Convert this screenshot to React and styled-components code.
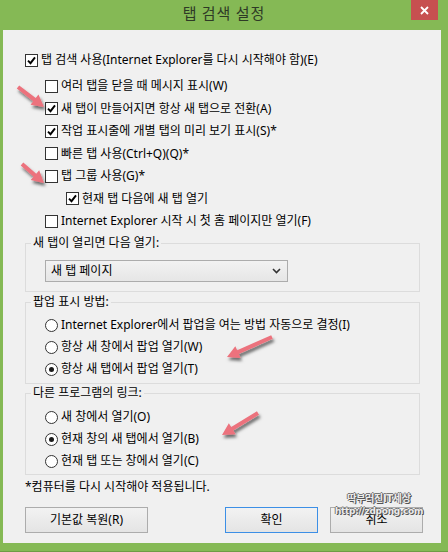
import styled, { createGlobalStyle } from "styled-components"

const GlobalStyle = createGlobalStyle`
  html, body {
    margin: 0;
    padding: 0;
    background: #85b955;
  }
  body {
    font-family: "Noto Sans", "Noto Sans CJK KR", sans-serif;
    font-size: 12px;
    color: #000;
  }
`

const options = [
    { label: "여러 탭을 닫을 때 메시지 표시(W)", checked: false, indent: 20 },
    { label: "새 탭이 만들어지면 항상 새 탭으로 전환(A)", checked: true, indent: 20 },
    { label: "작업 표시줄에 개별 탭의 미리 보기 표시(S)*", checked: true, indent: 20 },
    { label: "빠른 탭 사용(Ctrl+Q)(Q)*", checked: false, indent: 20 },
    { label: "탭 그룹 사용(G)*", checked: false, indent: 20 },
    { label: "현재 탭 다음에 새 탭 열기", checked: true, indent: 41 },
    { label: "Internet Explorer 시작 시 첫 홈 페이지만 열기(F)", checked: false, indent: 20 },
]

const popupOptions = [
    { label: "Internet Explorer에서 팝업을 여는 방법 자동으로 결정(I)", on: false },
    { label: "항상 새 창에서 팝업 열기(W)", on: false },
    { label: "항상 새 탭에서 팝업 열기(T)", on: true },
]

const linkOptions = [
    { label: "새 창에서 열기(O)", on: false },
    { label: "현재 창의 새 탭에서 열기(B)", on: true },
    { label: "현재 탭 또는 창에서 열기(C)", on: false },
]

const arrows = [
    [18, 87, 44, 107],
    [22, 164, 44, 183],
    [272, 337, 227, 357],
    [258, 413, 222, 435],
]

function arrowPoints([x1, y1, x2, y2]) {
    const dx = x2 - x1
    const dy = y2 - y1
    const len = Math.hypot(dx, dy)
    const ux = dx / len
    const uy = dy / len
    const px = -uy
    const py = ux
    const head = 12
    const hw = 6.5
    const sw = 2
    const bx = x2 - ux * head
    const by = y2 - uy * head
    const pts = [
        [x1 + px * sw, y1 + py * sw],
        [bx + px * sw, by + py * sw],
        [bx + px * hw, by + py * hw],
        [x2, y2],
        [bx - px * hw, by - py * hw],
        [bx - px * sw, by - py * sw],
        [x1 - px * sw, y1 - py * sw],
    ]
    return pts.map(p => p.join(",")).join(" ")
}

function CheckBox({ checked }) {
    return (
        <Box>
            {checked && (
                <svg width="9" height="9" viewBox="0 0 9 9">
                    <path d="M1 4.6 L3.5 7.2 L8 1.3" fill="none" stroke="#000" strokeWidth="1.9" />
                </svg>
            )}
        </Box>
    )
}

export default function App() {
    return (
        <Window>
            <GlobalStyle />
            <TitleBar>
                <span />
                <Title>탭 검색 설정</Title>
                <CloseButton>
                    <svg width="9" height="9" viewBox="0 0 9 9">
                        <path d="M1 1 L8 8 M8 1 L1 8" stroke="#fff" strokeWidth="1.8" />
                    </svg>
                </CloseButton>
            </TitleBar>

            <Client>
                <Row indent={0}>
                    <CheckBox checked />
                    <span>탭 검색 사용(Internet Explorer를 다시 시작해야 함)(E)</span>
                </Row>
                <SubOptions>
                    {options.map(o => (
                        <Row key={o.label} indent={o.indent}>
                            <CheckBox checked={o.checked} />
                            <span>{o.label}</span>
                        </Row>
                    ))}
                </SubOptions>

                <Group $mt={2.5}>
                    <Legend>새 탭이 열리면 다음 열기:</Legend>
                    <GroupBody $pt={9} $pb={9}>
                        <Select>
                            <span>새 탭 페이지</span>
                            <svg width="9" height="6" viewBox="0 0 9 6">
                                <path d="M1 1 L4.5 4.5 L8 1" fill="none" stroke="#333" strokeWidth="1.6" />
                            </svg>
                        </Select>
                    </GroupBody>
                </Group>

                <Group $mt={2}>
                    <Legend>팝업 표시 방법:</Legend>
                    <GroupBody $pt={4} $pb={3}>
                        {popupOptions.map(o => (
                            <RadioRow key={o.label}>
                                <Radio $on={o.on} />
                                <span>{o.label}</span>
                            </RadioRow>
                        ))}
                    </GroupBody>
                </Group>

                <Group $mt={1}>
                    <Legend>다른 프로그램의 링크:</Legend>
                    <GroupBody $pt={5} $pb={2}>
                        {linkOptions.map(o => (
                            <RadioRow key={o.label}>
                                <Radio $on={o.on} />
                                <span>{o.label}</span>
                            </RadioRow>
                        ))}
                    </GroupBody>
                </Group>

                <Note>*컴퓨터를 다시 시작해야 적용됩니다.</Note>

                <ButtonRow>
                    <Button $width={123}>기본값 복원(R)</Button>
                    <ButtonPair>
                        <Button $width={93} $primary>확인</Button>
                        <Button $width={93}>취소</Button>
                    </ButtonPair>
                </ButtonRow>
            </Client>

            <Watermark>
                <span>딱부러진IT세상</span>
                <span>http://zdpong.com</span>
            </Watermark>

            <Arrows width="448" height="552" viewBox="0 0 448 552">
                <defs>
                    <filter id="shadow" x="-50%" y="-50%" width="200%" height="200%">
                        <feDropShadow dx="1.5" dy="3" stdDeviation="1.8" floodColor="#000" floodOpacity="0.55" />
                    </filter>
                </defs>
                {arrows.map((a, i) => (
                    <polygon key={i} points={arrowPoints(a)} fill="#ec727d" filter="url(#shadow)" />
                ))}
            </Arrows>
        </Window>
    )
}

const Window = styled.div`
    position: relative;
    width: 448px;
    height: 552px;
    background: #85b955;
    border-bottom: 1px solid #6e9c45;
    box-sizing: border-box;
    overflow: hidden;
`
const TitleBar = styled.div`
    height: 30px;
    display: grid;
    grid-template-columns: 1fr auto 1fr;
    align-items: start;
`
const Title = styled.div`
    font-family: "Noto Sans CJK KR", sans-serif;
    font-size: 15px;
    line-height: 26px;
    color: #2e3a26;
    letter-spacing: 1px;
`
const CloseButton = styled.div`
    justify-self: end;
    margin-right: 10px;
    width: 27px;
    height: 20px;
    background: #c75050;
    display: flex;
    align-items: center;
    justify-content: center;
`
const Client = styled.div`
    margin: 0 7px 0 3px;
    height: 513px;
    box-sizing: border-box;
    background: #f0f0f0;
    padding: 19px 18px 10px 22px;
    display: flex;
    flex-direction: column;
`
const SubOptions = styled.div`
    margin-top: 3.5px;
`
const Row = styled.div`
    display: flex;
    align-items: center;
    gap: 3px;
    height: 22.5px;
    padding-left: ${p => p.indent}px;
    white-space: nowrap;
    line-height: 16px;
`
const Box = styled.span`
    width: 13px;
    height: 13px;
    box-sizing: border-box;
    border: 1px solid #333;
    background: #fff;
    display: flex;
    align-items: center;
    justify-content: center;
    flex-shrink: 0;
`
const Group = styled.fieldset`
    margin: ${p => p.$mt}px 3px 0 0;
    padding: 0;
    border: 1px solid #dcdcdc;
    min-width: 0;
`
const Legend = styled.legend`
    margin-left: 5px;
    padding: 0 2px;
    line-height: 16px;
`
const GroupBody = styled.div`
    padding: ${p => p.$pt}px 0 ${p => p.$pb}px 19px;
`
const Select = styled.div`
    width: 243px;
    height: 22px;
    box-sizing: border-box;
    border: 1px solid #acacac;
    background: linear-gradient(#f2f2f2, #e6e6e6);
    display: flex;
    align-items: center;
    justify-content: space-between;
    padding: 0 6px 0 5px;
    line-height: 16px;
`
const RadioRow = styled.div`
    display: flex;
    align-items: center;
    gap: 3px;
    height: 22px;
    white-space: nowrap;
    line-height: 16px;
`
const Radio = styled.span`
    width: 13px;
    height: 13px;
    box-sizing: border-box;
    border: 1px solid #333;
    border-radius: 50%;
    background: #fff;
    flex-shrink: 0;
    display: flex;
    align-items: center;
    justify-content: center;
    &::after {
        content: "";
        width: 5px;
        height: 5px;
        border-radius: 50%;
        background: #1a1a1a;
        display: ${p => (p.$on ? "block" : "none")};
    }
`
const Note = styled.div`
    margin-top: 4px;
    line-height: 16px;
`
const ButtonRow = styled.div`
    margin-top: 12px;
    display: flex;
    justify-content: space-between;
`
const ButtonPair = styled.div`
    display: flex;
    gap: 12px;
`
const Button = styled.div`
    width: ${p => p.$width}px;
    height: 26px;
    box-sizing: border-box;
    border: 1px solid ${p => (p.$primary ? "#3c8fe6" : "#acacac")};
    background: linear-gradient(#f2f2f2, #e4e4e4);
    display: flex;
    align-items: center;
    justify-content: center;
    line-height: 16px;
`
const Watermark = styled.div`
    position: absolute;
    left: 340px;
    top: 493px;
    width: 78px;
    display: flex;
    flex-direction: column;
    align-items: center;
    gap: 2px;
    font-family: "DejaVu Sans", "Noto Sans CJK KR", sans-serif;
    font-weight: bold;
    font-size: 9px;
    line-height: 11px;
    color: #ececec;
    text-shadow: 1px 1px 0 #555, -1px 0 0 #777, 0 -1px 0 #777, 1px 0 0 #666;
    letter-spacing: -0.3px;
    span:first-child {
        font-size: 10px;
    }
`
const Arrows = styled.svg`
    position: absolute;
    left: 0;
    top: 0;
    pointer-events: none;
`
